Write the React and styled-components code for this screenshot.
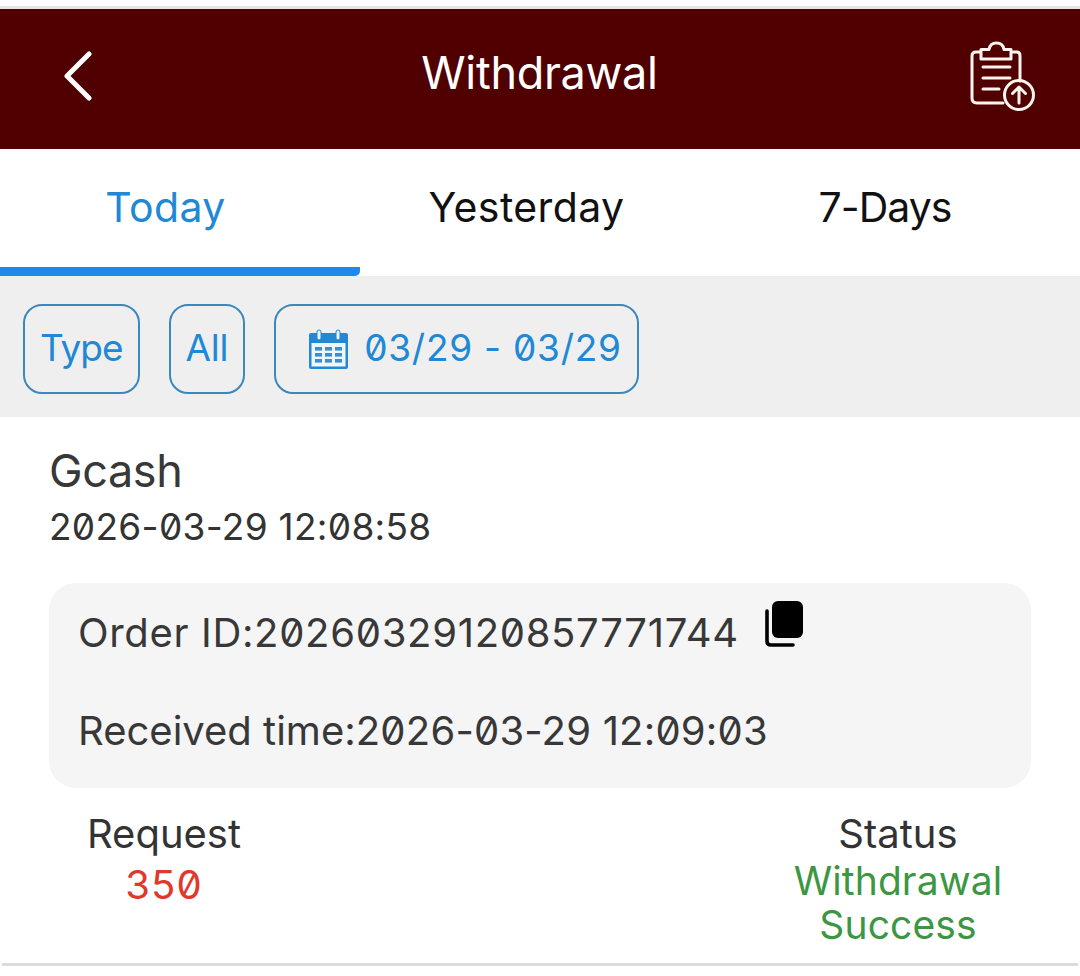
import React from "react";
import styled, { createGlobalStyle } from "styled-components";

const GlobalStyle = createGlobalStyle`
  html, body {
    margin: 0;
    padding: 0;
    background: #fff;
  }
  body {
    font-family: "Inter", "Noto Sans", sans-serif;
    font-feature-settings: "zero" 1;
  }
`;

const Page = styled.div`
  width: 1080px;
  height: 976px;
  overflow: hidden;
  background: #fff;
  padding-top: 6px;
  box-sizing: border-box;
`;

const TopEdge = styled.div`
  height: 3px;
  background: #efe2e2;
`;

const Header = styled.header`
  height: 140px;
  background: #500000;
  display: grid;
  grid-template-columns: 1fr auto 1fr;
  align-items: center;
  padding: 0 45px 0 62px;
  color: #fff;
`;

const BackButton = styled.div`
  display: flex;
  align-items: center;
  margin-bottom: 6px;
`;

const HeaderTitle = styled.h1`
  margin: 0 18px 14px 0;
  font-size: 45px;
  font-weight: 400;
  letter-spacing: -0.3px;
  color: #fff;
`;

const HeaderAction = styled.div`
  display: flex;
  justify-content: flex-end;
  margin-bottom: 4px;
`;

const Tabs = styled.nav`
  height: 127px;
  display: grid;
  grid-template-columns: 360px 333px 387px;
`;

const Tab = styled.div`
  display: flex;
  align-items: flex-start;
  justify-content: center;
  padding: 33px ${(p) => p.$shift || "0"} 0 0;
  box-sizing: border-box;
  font-size: 41px;
  line-height: 50px;
  letter-spacing: ${(p) => p.$spacing || "0.4px"};
  color: ${(p) => (p.$active ? "#2088d4" : "#111")};
  border-bottom: 9px solid ${(p) => (p.$active ? "#2088ea" : "transparent")};
  border-bottom-right-radius: ${(p) => (p.$active ? "5px" : "0")};
`;

const FilterBar = styled.div`
  height: 141px;
  box-sizing: border-box;
  background: #efeff0;
  display: flex;
  gap: 29px;
  padding: 28px 23px 0;
`;

const FilterButton = styled.div`
  height: 90px;
  box-sizing: border-box;
  border: 2px solid #3a88bc;
  border-radius: 19px;
  padding: ${(p) => p.$pad || "0 15px"};
  display: flex;
  align-items: center;
  gap: 15px;
  font-size: 37px;
  color: #2088d4;
`;

const FilterLabel = styled.span`
  margin-bottom: 4px;
  letter-spacing: ${(p) => p.$spacing || "0"};
`;

const Record = styled.section`
  padding: 27px 49px 0;
`;

const Channel = styled.div`
  font-size: 45px;
  line-height: 54px;
  color: #383838;
  letter-spacing: -0.4px;
`;

const Time = styled.div`
  font-size: 37px;
  line-height: 42px;
  margin-top: 8px;
  color: #333;
  letter-spacing: 0.3px;
`;

const InfoPanel = styled.div`
  margin-top: 35px;
  height: 205px;
  box-sizing: border-box;
  background: #f5f5f5;
  border-radius: 27px;
  padding: 27px 29px 0;
`;

const InfoRow = styled.div`
  display: flex;
  align-items: flex-start;
  gap: 26px;
  font-size: 40px;
  line-height: 46px;
  color: #383838;
  margin-bottom: ${(p) => p.$gap || "0"};
`;

const Spaced = styled.span`
  letter-spacing: ${(p) => p.$spacing};
`;

const CopyButton = styled.div`
  margin-top: -9px;
  display: flex;
`;

const Summary = styled.div`
  display: flex;
  justify-content: space-between;
  padding: 24px 27px 0 37px;
`;

const SummaryCol = styled.div`
  display: flex;
  flex-direction: column;
  align-items: center;
  text-align: center;
  width: ${(p) => p.$width};
  font-size: 40px;
  line-height: 44px;
  color: #333;
`;

const Amount = styled.div`
  margin-top: 7px;
  letter-spacing: 1px;
  color: #e0392b;
`;

const StatusText = styled.div`
  margin-top: 3px;
  font-size: 39px;
  letter-spacing: 0.1px;
  color: #3c9642;
`;

const Divider = styled.div`
  height: 3px;
  margin: 16px 2px 0;
  background: #dcdcdc;
`;

function BackIcon() {
  return (
    <svg width="32" height="50" viewBox="0 0 32 50" fill="none">
      <path d="M27 3 L5 25 L27 47" stroke="#fff" strokeWidth="5" strokeLinecap="round" strokeLinejoin="round" />
    </svg>
  );
}

function ClipboardUploadIcon() {
  return (
    <svg width="65" height="72" viewBox="0 0 65 72" fill="none" stroke="#fdf3ef" strokeWidth="3" strokeLinecap="round" strokeLinejoin="round">
      <path d="M10 11 H6 Q2 11 2 15 V57 Q2 62 7 62 H33" />
      <path d="M43 11 H47 Q50 11 50 15 V40" />
      <path d="M11 18 V8.5 H19 Q20 2 26.5 2 Q33 2 34 8.5 H41 V18 Z" />
      <path d="M13 26 H40 M13 37 H40 M13 48 H29" />
      <circle cx="49" cy="54" r="14.5" />
      <path d="M49 62 V47 M42.5 52.5 L49 46 L55.5 52.5" />
    </svg>
  );
}

function CalendarIcon() {
  return (
    <svg width="41" height="41" viewBox="0 0 41 41">
      <path d="M3 4 H38 Q40 4 40 6 V38 Q40 40 38 40 H3 Q1 40 1 38 V6 Q1 4 3 4 Z" fill="#2088d4" />
      <rect x="3.5" y="14" width="34" height="23.5" fill="#eef5fb" />
      <rect x="9" y="1" width="4" height="10" rx="2" fill="#eef5fb" stroke="#2088d4" strokeWidth="1" />
      <rect x="28" y="1" width="4" height="10" rx="2" fill="#eef5fb" stroke="#2088d4" strokeWidth="1" />
      {[18, 24, 30].map((y) =>
        [7, 17, 27].map((x) => (
          <rect key={`${x}-${y}`} x={x} y={y} width="7" height="3.6" fill="#3a8fcf" />
        ))
      )}
    </svg>
  );
}

function CopyIcon() {
  return (
    <svg width="38" height="46" viewBox="0 0 38 46">
      <rect x="7" y="0" width="31" height="37" rx="6" fill="#000" />
      <path d="M2 10 V40 Q2 44 6 44 H28" fill="none" stroke="#000" strokeWidth="3.6" strokeLinecap="round" />
    </svg>
  );
}

export default function App() {
  return (
    <Page>
      <GlobalStyle />
      <TopEdge />
      <Header>
        <BackButton>
          <BackIcon />
        </BackButton>
        <HeaderTitle>Withdrawal</HeaderTitle>
        <HeaderAction>
          <ClipboardUploadIcon />
        </HeaderAction>
      </Header>
      <Tabs>
        <Tab $active $shift="29px">Today</Tab>
        <Tab>Yesterday</Tab>
        <Tab $spacing="-1px" $shift="3px">7-Days</Tab>
      </Tabs>
      <FilterBar>
        <FilterButton>
          <FilterLabel $spacing="-1px">Type</FilterLabel>
        </FilterButton>
        <FilterButton>
          <FilterLabel $spacing="-0.3px">All</FilterLabel>
        </FilterButton>
        <FilterButton $pad="0 15px 0 32px">
          <CalendarIcon />
          <FilterLabel $spacing="0.75px">03/29 - 03/29</FilterLabel>
        </FilterButton>
      </FilterBar>
      <Record>
        <Channel>Gcash</Channel>
        <Time>2026-03-29 12:08:58</Time>
        <InfoPanel>
          <InfoRow $gap="52px">
            <span>
              <Spaced $spacing="0.65px">Order ID:</Spaced>
              <Spaced $spacing="0.7px">20260329120857771744</Spaced>
            </span>
            <CopyButton>
              <CopyIcon />
            </CopyButton>
          </InfoRow>
          <InfoRow>
            <span>
              Received time:<Spaced $spacing="0.2px">2026-03-29 12:09:03</Spaced>
            </span>
          </InfoRow>
        </InfoPanel>
        <Summary>
          <SummaryCol $width="156px">
            Request
            <Amount>350</Amount>
          </SummaryCol>
          <SummaryCol $width="212px">
            Status
            <StatusText>Withdrawal Success</StatusText>
          </SummaryCol>
        </Summary>
      </Record>
      <Divider />
    </Page>
  );
}
